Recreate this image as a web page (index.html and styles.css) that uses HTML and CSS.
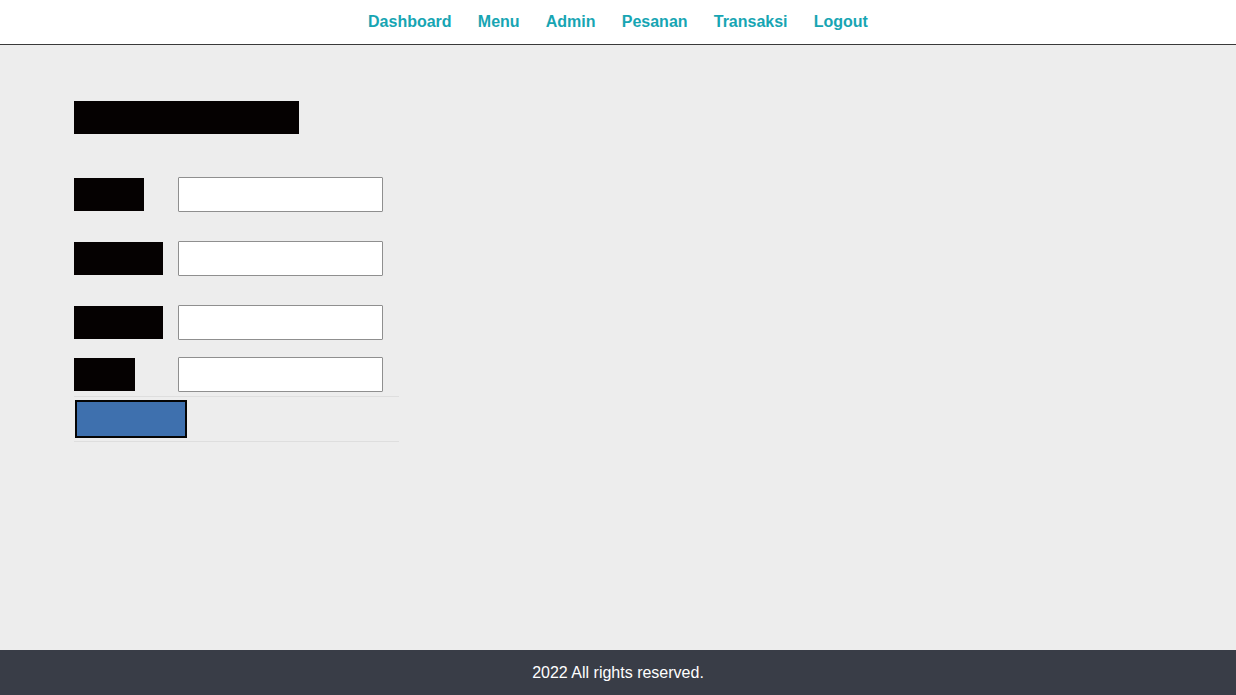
FILE: index.html
```html
<!DOCTYPE html>
<html lang="id">
<head>
<meta charset="utf-8">
<title>Admin</title>
<link rel="stylesheet" href="styles.css">
</head>
<body>
<header class="topbar">
  <nav class="nav">
    <a href="#" class="nav-link">Dashboard</a>
    <a href="#" class="nav-link">Menu</a>
    <a href="#" class="nav-link">Admin</a>
    <a href="#" class="nav-link">Pesanan</a>
    <a href="#" class="nav-link">Transaksi</a>
    <a href="#" class="nav-link">Logout</a>
  </nav>
</header>
<main class="content">
  <div class="title-block"></div>
  <form class="form">
    <div class="row row-1">
      <div class="label-block w70"></div>
      <input class="field" type="text">
    </div>
    <div class="row row-2">
      <div class="label-block w89"></div>
      <input class="field" type="text">
    </div>
    <div class="row row-3">
      <div class="label-block w89"></div>
      <input class="field" type="password">
    </div>
    <div class="row row-4">
      <div class="label-block w61"></div>
      <input class="field" type="text">
    </div>
    <div class="actions">
      <button type="button" class="submit"></button>
    </div>
  </form>
</main>
<footer class="footer">2022 All rights reserved.</footer>
</body>
</html>
```

FILE: styles.css
```css
* { box-sizing: border-box; }
html, body { height: 100%; }
body {
  margin: 0;
  font-family: "Liberation Sans", Arial, sans-serif;
  background: #ededed;
  display: flex;
  flex-direction: column;
  min-height: 695px;
}
.topbar {
  background: #ffffff;
  height: 45px;
  border-bottom: 1px solid #3a3a3a;
  display: flex;
  justify-content: center;
  align-items: center;
}
.nav {
  display: flex;
  gap: 26.2px;
  padding-bottom: 1px;
}
.nav-link {
  color: #17a5b3;
  font-weight: bold;
  font-size: 16px;
  text-decoration: none;
}
.content {
  flex: 1;
  padding: 56px 74px 0;
}
.title-block {
  width: 225px;
  height: 33px;
  background: #050101;
}
.form {
  margin-top: 43px;
  width: 325px;
}
.row {
  display: flex;
  align-items: center;
  height: 35px;
}
.row-2, .row-3 { margin-top: 29px; }
.row-4 { margin-top: 17px; }
.label-block {
  height: 33px;
  background: #050101;
}
.w70 { width: 70px; margin-right: 34px; }
.w89 { width: 89px; margin-right: 15px; }
.w61 { width: 61px; margin-right: 43px; }
.field {
  width: 205px;
  height: 35px;
  border: 1px solid #8f8f8f;
  border-radius: 1px;
  background: #ffffff;
  padding: 0 6px;
  margin: 0;
  font: 14px "Liberation Sans", Arial, sans-serif;
}
.actions {
  margin-top: 4px;
  border-top: 1px solid #dedede;
  border-bottom: 1px solid #dedede;
  padding: 3px 0 3px 1px;
}
.submit {
  display: block;
  width: 112px;
  height: 38px;
  background: #3e70ae;
  border: 2px solid #050505;
  padding: 0;
  margin: 0;
}
.footer {
  height: 45px;
  background: #393d47;
  color: #ffffff;
  font-size: 16px;
  display: flex;
  align-items: center;
  justify-content: center;
}
```
